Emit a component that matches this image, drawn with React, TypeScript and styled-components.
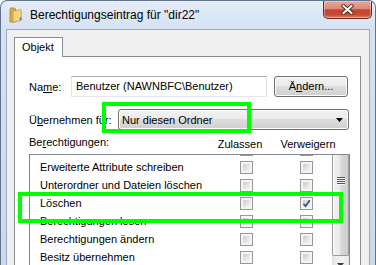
import React from 'react';
import styled, { createGlobalStyle } from 'styled-components';

type Permission = { label: string; allow: boolean; deny: boolean };

const permissions: Permission[] = [
  { label: 'Ordner erstellen / Daten anhängen', allow: false, deny: false },
  { label: 'Erweiterte Attribute schreiben', allow: false, deny: false },
  { label: 'Unterordner und Dateien löschen', allow: false, deny: false },
  { label: 'Löschen', allow: false, deny: true },
  { label: 'Berechtigungen lesen', allow: false, deny: false },
  { label: 'Berechtigungen ändern', allow: false, deny: false },
  { label: 'Besitz übernehmen', allow: false, deny: false },
];

const GlobalStyle = createGlobalStyle`
  html, body {
    margin: 0;
    padding: 0;
    background: #fff;
  }
  body {
    font-family: "Liberation Sans", Arial, sans-serif;
    font-size: 11px;
    color: #000;
  }
`;

const Window = styled.div`
  position: relative;
  width: 376px;
  height: 265px;
  box-sizing: border-box;
  border: 1px solid #62748b;
  border-bottom: none;
  border-radius: 7px 7px 0 0;
  background: linear-gradient(to bottom, #e4edf8 0px, #d5e2f2 28px, #cad9ed 100%);
  overflow: hidden;
  display: flex;
  flex-direction: column;
`;

const TitleBar = styled.div`
  flex-shrink: 0;
  height: 28px;
  display: flex;
  align-items: center;
  padding-left: 8px;
`;

const Title = styled.span`
  margin-left: 7px;
  font-size: 12px;
  white-space: nowrap;
`;

const CloseButton = styled.div`
  margin-left: auto;
  margin-right: 3px;
  align-self: flex-start;
  width: 49px;
  height: 18px;
  box-sizing: border-box;
  border: 1px solid #6b2b21;
  border-top: none;
  border-radius: 0 0 5px 5px;
  background: linear-gradient(
    to bottom,
    #eaa999 0%,
    #dc8a77 45%,
    #c4452f 52%,
    #c54b33 80%,
    #d9806a 100%
  );
  box-shadow: inset 0 0 0 1px rgba(255, 220, 210, 0.45);
  display: flex;
  align-items: center;
  justify-content: center;
`;

const Client = styled.div`
  flex: 1;
  min-height: 0;
  margin: 0 5px;
  border: 1px solid #9aabc0;
  border-bottom: none;
  background: #f0f0f0;
  padding: 7px 8px 0 7px;
  display: flex;
  flex-direction: column;
  overflow: hidden;
`;

const Tab = styled.div`
  position: relative;
  z-index: 1;
  align-self: flex-start;
  width: 49px;
  height: 21px;
  box-sizing: border-box;
  margin-bottom: -1px;
  border: 1px solid #898c95;
  border-bottom: none;
  background: #fff;
  padding-left: 7px;
  line-height: 19px;
`;

const Panel = styled.div`
  flex-shrink: 0;
  border: 1px solid #898c95;
  background: #fff;
  padding: 19px 0 12px 14px;
`;

const FieldRow = styled.div<{ $top?: number }>`
  display: flex;
  align-items: center;
  height: 21px;
  margin-top: ${(p) => p.$top ?? 0}px;
`;

const FieldLabel = styled.span<{ $w: number }>`
  width: ${(p) => p.$w}px;
  flex-shrink: 0;
  white-space: nowrap;
`;

const Key = styled.span`
  text-decoration: underline;
  text-underline-offset: 1px;
`;

const TextBox = styled.div`
  width: 196px;
  height: 21px;
  box-sizing: border-box;
  border: 1px solid;
  border-color: #abadb3 #dbdfe6 #e3e9ef #e2e3ea;
  padding-left: 4px;
  line-height: 19px;
  white-space: nowrap;
  overflow: hidden;
`;

const PushButton = styled.div`
  margin-left: 7px;
  width: 74px;
  height: 21px;
  box-sizing: border-box;
  border: 1px solid #707070;
  border-radius: 3px;
  background: linear-gradient(to bottom, #f2f2f2 0%, #ebebeb 50%, #dddddd 50%, #cfcfcf 100%);
  box-shadow: inset 0 0 0 1px #fcfcfc;
  text-align: center;
  line-height: 19px;
`;

const ComboBox = styled.div`
  width: 231px;
  height: 21px;
  box-sizing: border-box;
  border: 1px solid #707070;
  border-radius: 3px;
  background: linear-gradient(to bottom, #f2f2f2 0%, #ebebeb 50%, #dddddd 50%, #cfcfcf 100%);
  box-shadow: inset 0 0 0 1px #fcfcfc;
  display: flex;
  align-items: center;
  justify-content: space-between;
  padding: 0 5px 0 3px;
`;

const HeaderRow = styled.div`
  display: flex;
  align-items: flex-start;
  height: 17px;
  margin-top: 4px;
  line-height: 16px;
`;

const ColumnHeader = styled.span<{ $gap?: number }>`
  width: 60px;
  margin-left: ${(p) => p.$gap ?? 0}px;
  padding-top: 2px;
  text-align: center;
  white-space: nowrap;
`;

const ListBox = styled.div`
  margin-top: 3px;
  width: 321px;
  height: 120px;
  box-sizing: border-box;
  border: 1px solid #828790;
  display: flex;
`;

const ListViewport = styled.div`
  flex: 1;
  overflow: hidden;
`;

const ListContent = styled.div`
  margin-top: -15px;
`;

const PermissionRow = styled.div`
  height: 18px;
  display: grid;
  grid-template-columns: 153px 13px 13px;
  column-gap: 47px;
  align-items: center;
  padding-left: 10px;
`;

const PermissionName = styled.span`
  white-space: nowrap;
`;

const CheckBox = styled.div`
  position: relative;
  width: 13px;
  height: 13px;
  box-sizing: border-box;
  border: 1px solid #979797;
  background: #f5f5f5;
  &::before {
    content: '';
    position: absolute;
    inset: 2px;
    background: linear-gradient(135deg, #c9cbcf 0%, #e4e5e6 55%, #f3f3f3 100%);
  }
  svg {
    position: absolute;
    left: 1px;
    top: 1px;
  }
`;

const ScrollBar = styled.div`
  width: 17px;
  flex-shrink: 0;
  display: flex;
  flex-direction: column;
  background: linear-gradient(to right, #e2e2e2 0%, #eeeeee 25%, #f2f2f2 60%, #ebebeb 100%);
`;

const ScrollThumb = styled.div`
  flex: 1;
  box-sizing: border-box;
  border: 1px solid #9a9a9a;
  border-top: none;
  border-radius: 0 0 2px 2px;
  background: linear-gradient(to right, #f4f4f4 0%, #e9e9e9 45%, #d8d8d8 55%, #cdcdcd 100%);
  box-shadow: inset 1px 0 0 #fbfbfb;
  display: flex;
  justify-content: center;
  padding-top: 22px;
`;

const ScrollButton = styled.div`
  height: 17px;
  flex-shrink: 0;
  display: flex;
  align-items: center;
  justify-content: center;
`;

const Highlight = styled.div<{ $x: number; $y: number; $w: number; $h: number }>`
  position: absolute;
  z-index: 5;
  left: ${(p) => p.$x}px;
  top: ${(p) => p.$y}px;
  width: ${(p) => p.$w}px;
  height: ${(p) => p.$h}px;
  box-sizing: border-box;
  border: 4px solid #00ff00;
  pointer-events: none;
`;

const FolderIcon = () => (
  <svg width="14" height="16" viewBox="0 0 14 16">
    <path d="M1 2.2 Q1 1 2.2 1 H5.5 L6.5 2 V15 H1 Z" fill="#d5ad52" stroke="#a57d2b" strokeWidth="0.8" />
    <path d="M4 4.2 L11.2 2.6 Q12.3 2.4 12.3 3.6 V13.4 L4 15.2 Z" fill="#f5d67e" stroke="#c49c3c" strokeWidth="0.8" />
    <rect x="10.6" y="10.5" width="1.8" height="2.6" fill="#4b86d6" />
  </svg>
);

const CloseGlyph = () => (
  <svg width="13" height="11" viewBox="0 0 13 11">
    <path d="M2.5 2 L10.5 9 M10.5 2 L2.5 9" stroke="#4a2622" strokeWidth="3.8" strokeLinecap="square" />
    <path d="M2.5 2 L10.5 9 M10.5 2 L2.5 9" stroke="#ffffff" strokeWidth="2" strokeLinecap="square" />
  </svg>
);

const DownTriangle = ({ color }: { color: string }) => (
  <svg width="7" height="4" viewBox="0 0 7 4">
    <path d="M0 0 H7 L3.5 4 Z" fill={color} />
  </svg>
);

const Grip = () => (
  <svg width="8" height="8" viewBox="0 0 8 8">
    {[0, 2, 4, 6].map((y) => (
      <g key={y}>
        <rect x="0" y={y} width="8" height="1" fill="#565656" />
        <rect x="0" y={y + 1} width="8" height="1" fill="#f6f6f6" />
      </g>
    ))}
  </svg>
);

const Check = ({ checked }: { checked: boolean }) => (
  <CheckBox>
    {checked && (
      <svg width="9" height="9" viewBox="0 0 9 9">
        <path d="M1.5 4.8 L3.6 7.2 L7.8 1.2" fill="none" stroke="#2f4c86" strokeWidth="1.7" />
      </svg>
    )}
  </CheckBox>
);

export default function App() {
  return (
    <>
      <GlobalStyle />
      <Window>
        <TitleBar>
          <FolderIcon />
          <Title>Berechtigungseintrag für "dir22"</Title>
          <CloseButton>
            <CloseGlyph />
          </CloseButton>
        </TitleBar>
        <Client>
          <Tab>Objekt</Tab>
          <Panel>
            <FieldRow>
              <FieldLabel $w={42}>
                Na<Key>m</Key>e:
              </FieldLabel>
              <TextBox>Benutzer (NAWNBFC\Benutzer)</TextBox>
              <PushButton>
                Ä<Key>n</Key>dern...
              </PushButton>
            </FieldRow>
            <FieldRow $top={12}>
              <FieldLabel $w={89}>
                Ü<Key>b</Key>ernehmen für:
              </FieldLabel>
              <ComboBox>
                <span>Nur diesen Ordner</span>
                <DownTriangle color="#000" />
              </ComboBox>
            </FieldRow>
            <HeaderRow>
              <FieldLabel $w={181}>
                Be<Key>r</Key>echtigungen:
              </FieldLabel>
              <ColumnHeader>Zulassen</ColumnHeader>
              <ColumnHeader $gap={8}>Verweigern</ColumnHeader>
            </HeaderRow>
            <ListBox>
              <ListViewport>
                <ListContent>
                  {permissions.map((p) => (
                    <PermissionRow key={p.label}>
                      <PermissionName>{p.label}</PermissionName>
                      <Check checked={p.allow} />
                      <Check checked={p.deny} />
                    </PermissionRow>
                  ))}
                </ListContent>
              </ListViewport>
              <ScrollBar>
                <ScrollThumb>
                  <Grip />
                </ScrollThumb>
                <ScrollButton>
                  <DownTriangle color="#3c3c3c" />
                </ScrollButton>
              </ScrollBar>
            </ListBox>
          </Panel>
        </Client>
        <Highlight $x={101} $y={101} $w={149} $h={31} />
        <Highlight $x={17} $y={191} $w={325} $h={31} />
      </Window>
    </>
  );
}
